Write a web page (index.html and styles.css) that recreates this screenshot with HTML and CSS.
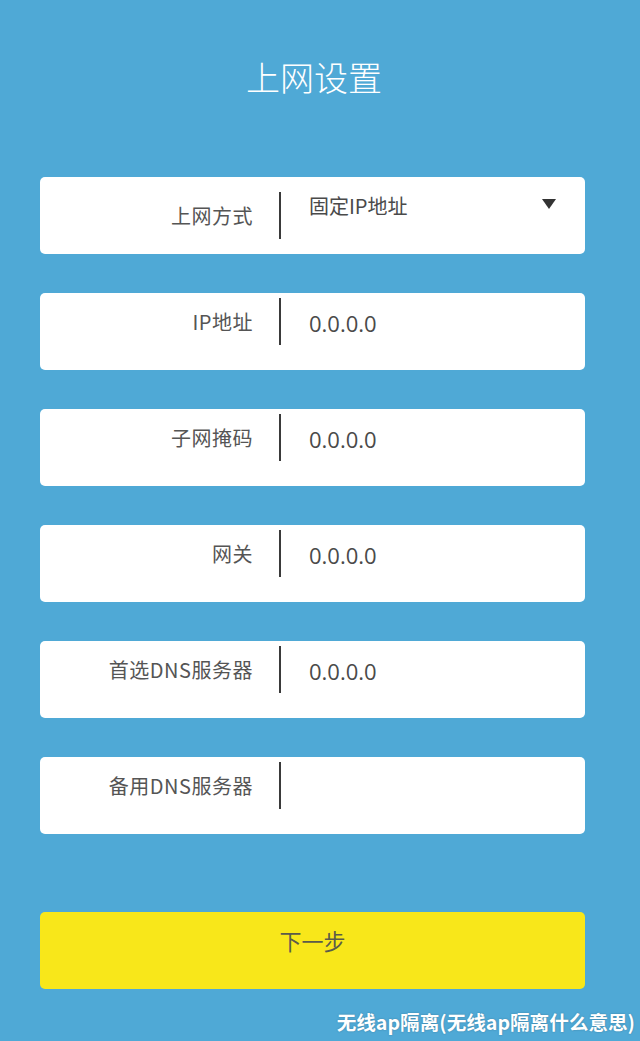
FILE: index.html
```html
<!DOCTYPE html>
<html lang="zh-CN">
<head>
<meta charset="utf-8">
<title>上网设置</title>
<link rel="stylesheet" href="styles.css">
</head>
<body>
<div class="page">
  <h1 class="title">上网设置</h1>
  <div class="form">
    <div class="card card-select">
      <div class="label">上网方式</div>
      <div class="divider"></div>
      <div class="value value-select">固定IP地址</div>
      <div class="caret"></div>
    </div>
    <div class="card">
      <div class="label">IP地址</div>
      <div class="divider"></div>
      <div class="value">0.0.0.0</div>
    </div>
    <div class="card">
      <div class="label">子网掩码</div>
      <div class="divider"></div>
      <div class="value">0.0.0.0</div>
    </div>
    <div class="card">
      <div class="label">网关</div>
      <div class="divider"></div>
      <div class="value">0.0.0.0</div>
    </div>
    <div class="card">
      <div class="label">首选DNS服务器</div>
      <div class="divider"></div>
      <div class="value">0.0.0.0</div>
    </div>
    <div class="card">
      <div class="label">备用DNS服务器</div>
      <div class="divider"></div>
      <div class="value"></div>
    </div>
    <div class="button">下一步</div>
  </div>
  <div class="watermark">无线ap隔离(无线ap隔离什么意思)</div>
</div>
</body>
</html>
```
FILE: styles.css
```css
html, body {
  margin: 0;
  padding: 0;
  background: #4fa9d6;
}
body {
  font-family: Roboto, "Noto Sans CJK SC", sans-serif;
  width: 640px;
  height: 1041px;
  overflow: hidden;
}
.page {
  display: flex;
  flex-direction: column;
}
.title {
  margin: 0;
  padding-top: 56px;
  height: 42px;
  line-height: 42px;
  font-size: 34px;
  font-weight: 300;
  color: #ffffff;
  text-align: center;
  padding-right: 12px;
  font-family: "Noto Sans CJK SC", sans-serif;
}
.form {
  margin-top: 79px;
  margin-left: 40px;
  width: 545px;
  display: flex;
  flex-direction: column;
  gap: 39px;
}
.card {
  box-sizing: border-box;
  height: 77px;
  background: #ffffff;
  border-radius: 5px;
  display: flex;
  align-items: flex-start;
  padding-top: 5px;
  position: relative;
}
.card-select {
  padding-top: 15px;
}
.label {
  width: 213px;
  text-align: right;
  line-height: 47px;
  height: 47px;
  font-size: 20px;
  color: #555555;
  font-family: "Noto Sans CJK SC", sans-serif;
  letter-spacing: 0.5px;
}
.divider {
  width: 2px;
  height: 47px;
  background: #3a3a3a;
  margin-left: 26px;
}
.value {
  margin-left: 28px;
  line-height: 50px;
  font-size: 22px;
  color: #4a4a4a;
  font-family: "Open Sans", "Noto Sans CJK SC", sans-serif;
}
.value-select {
  line-height: 28px;
  margin-top: 0;
  font-size: 20px;
  font-family: "Noto Sans CJK SC", sans-serif;
}
.caret {
  position: absolute;
  right: 29px;
  top: 22px;
  width: 0;
  height: 0;
  border-left: 7px solid transparent;
  border-right: 7px solid transparent;
  border-top: 10px solid #333333;
}
.button {
  margin-top: 39px;
  height: 77px;
  line-height: 57px;
  background: #f8e71a;
  border-radius: 5px;
  text-align: center;
  font-size: 22px;
  color: #5b5b4a;
  font-family: "Noto Sans CJK SC", sans-serif;
}
.watermark {
  margin-top: 20px;
  align-self: flex-end;
  margin-right: 5px;
  line-height: 26px;
  font-size: 19.6px;
  font-weight: 700;
  color: #ffffff;
  font-family: "Noto Sans CJK SC", sans-serif;
  text-shadow: 0 0 2px rgba(0,0,0,0.25);
}
```
